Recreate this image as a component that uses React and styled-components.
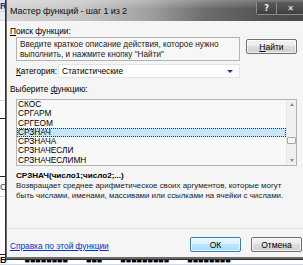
import React from 'react'
import styled, { createGlobalStyle } from 'styled-components'

const GlobalStyle = createGlobalStyle`
  html, body {
    margin: 0;
    padding: 0;
    background: #ffffff;
  }
  body {
    font-family: "Liberation Sans", Arial, sans-serif;
    font-size: 8.3px;
    color: #000;
  }
`

const Desktop = styled.div`
  position: relative;
  width: 303px;
  height: 265px;
  overflow: hidden;
  background: #ffffff;
`

/* excel sheet peeking out behind the dialog */
const Sheet = styled.div`
  display: grid;
  grid-template-rows: 12px 9px 80px 18px 58px 20px 58px 10px;
  height: 265px;
`

const SheetRow = styled.div`
  background: ${p => p.bg || '#fff'};
  border-bottom: 1px solid ${p => p.line || '#d0d7e5'};
  display: flex;
  align-items: ${p => (p.top ? 'flex-start' : 'center')};
  font-size: 9px;
  font-weight: ${p => (p.bold ? 'bold' : 'normal')};
  color: ${p => p.color || '#000'};
  white-space: nowrap;
  gap: 18px;
  overflow: hidden;
`

const Window = styled.div`
  position: absolute;
  left: 5px;
  top: 0;
  bottom: 5px;
  width: 310px;
  box-sizing: border-box;
  border: 1px solid #2e2e2e;
  border-top: none;
  background: #6b6b6b;
  padding: 0 0 2px 1px;
  display: flex;
  flex-direction: column;
`

const TitleBar = styled.div`
  height: 21px;
  flex: none;
  display: flex;
  align-items: center;
  padding-left: 3px;
  background:
    linear-gradient(to bottom, rgba(255,255,255,0.25), rgba(255,255,255,0) 45%),
    linear-gradient(to right, #d2d2d2 0%, #c4c4c4 25%, #a2a2a2 45%, #6c6c6c 65%, #505050 85%, #464646 100%);
`

const Title = styled.div`
  font-size: 9px;
  color: #111;
  flex: 1;
  letter-spacing: -0.1px;
`

const CaptionButtons = styled.div`
  display: flex;
  align-self: flex-start;
  margin-top: 2px;
  margin-right: 9px;
  border: 1px solid #8c8c8c;
  border-top: none;
  border-radius: 0 0 3px 3px;
`

const CaptionButton = styled.div`
  width: ${p => p.w}px;
  height: 12px;
  display: flex;
  align-items: center;
  justify-content: center;
  background: linear-gradient(to bottom, #5c5c5c, #3f3f3f);
  color: #f4f4f4;
  font-family: "DejaVu Sans", sans-serif;
  font-weight: bold;
  font-size: 8px;
  & + & {
    border-left: 1px solid #8c8c8c;
  }
`

const Client = styled.div`
  flex: 1;
  min-height: 0;
  background: #f5f5f5;
  display: flex;
  flex-direction: column;
  padding: 4px 0 0 3px;
`

const Label = styled.div`
  height: 12px;
  line-height: 12px;
  margin-top: ${p => p.mt || 0}px;
  u { text-decoration: underline; }
`

const SearchRow = styled.div`
  display: flex;
  align-items: flex-start;
  gap: 6px;
  margin-left: 6px;
`

const SearchBox = styled.div`
  width: 224px;
  height: 24px;
  box-sizing: border-box;
  border: 1px solid #b3b3b3;
  background: #f7f7f7;
  padding: 2px 3px;
  font-size: 8.2px;
  line-height: 10px;
  color: #1a1a1a;
`

const Button = styled.div`
  width: ${p => p.w || 51}px;
  height: 15px;
  box-sizing: border-box;
  margin-top: ${p => p.mt || 0}px;
  border: 1px solid ${p => (p.primary ? '#3c7fb1' : '#707070')};
  border-radius: 2px;
  display: flex;
  align-items: center;
  justify-content: center;
  font-size: 8.5px;
  background: ${p =>
    p.primary
      ? 'linear-gradient(to bottom, #eaf6fd 0%, #d9f0fc 45%, #bee6fd 50%, #a7d9f5 100%)'
      : 'linear-gradient(to bottom, #f2f2f2 0%, #ebebeb 45%, #dddddd 50%, #cfcfcf 100%)'};
  box-shadow: inset 0 0 0 1px rgba(255,255,255,0.7);
  u { text-decoration: underline; }
`

const CategoryRow = styled.div`
  display: flex;
  align-items: center;
  margin: 3px 0 0 6px;
  height: 14px;
`

const CategoryLabel = styled.div`
  width: 42px;
  u { text-decoration: underline; }
`

const Select = styled.div`
  width: 182px;
  height: 14px;
  box-sizing: border-box;
  background: #ffffff;
  border: 1px solid #e3e3e3;
  display: flex;
  align-items: center;
  justify-content: space-between;
  padding: 0 6px 0 3px;
`

const Arrow = styled.span`
  width: 0;
  height: 0;
  border-left: 3px solid transparent;
  border-right: 3px solid transparent;
  border-top: 3px solid #1f3a8a;
`

const ListBox = styled.div`
  margin: 4px 0 0 6px;
  width: 281px;
  height: 67px;
  flex: none;
  box-sizing: border-box;
  border: 1px solid #b3b3b3;
  background: #f8f8f8;
  display: flex;
`

const Items = styled.div`
  flex: 1;
  display: flex;
  flex-direction: column;
`

const Item = styled.div`
  height: 9.3px;
  line-height: 9.3px;
  padding-left: 1px;
  font-size: 8.3px;
  box-sizing: border-box;
  background: ${p => (p.selected ? '#c7e6f7' : 'transparent')};
  outline: ${p => (p.selected ? '1px dotted #333' : 'none')};
  outline-offset: -1px;
`

const ScrollBar = styled.div`
  width: 10px;
  border-left: 1px solid #e6e6e6;
  background: #f0f0f0;
  display: flex;
  flex-direction: column;
  align-items: center;
  justify-content: space-between;
  padding: 3px 0;
  box-sizing: border-box;
  position: relative;
`

const ScrollArrow = styled.span`
  width: 0;
  height: 0;
  border-left: 2.5px solid transparent;
  border-right: 2.5px solid transparent;
  ${p => (p.up ? 'border-bottom: 3px solid #8a8a8a;' : 'border-top: 3px solid #8a8a8a;')}
`

const Thumb = styled.div`
  position: absolute;
  left: 0;
  right: 0;
  top: 37px;
  height: 5px;
  border: 1px solid #a8a8a8;
  border-radius: 1px;
  background: #f4f4f4;
`

const Signature = styled.div`
  margin: 4px 0 0 6px;
  height: 11px;
  line-height: 11px;
  font-size: 8.1px;
  font-weight: bold;
`

const Description = styled.div`
  margin-left: 6px;
  font-size: 7.9px;
  line-height: 10px;
  white-space: nowrap;
  color: #1a1a1a;
`

const Footer = styled.div`
  margin-top: auto;
  margin-left: -3px;
  border-top: 1px solid #e2e2e2;
  height: 27px;
  flex: none;
  display: flex;
  align-items: center;
  gap: 10px;
  padding: 1px 0 0 3px;
`

const HelpLink = styled.a`
  color: #0033cc;
  text-decoration: underline;
  flex: 1;
  margin-top: 4px;
`

const Buttons = styled.div`
  display: flex;
  gap: 10px;
  margin-right: 12px;
  margin-top: 2px;
`

const functions = ['СКОС', 'СРГАРМ', 'СРГЕОМ', 'СРЗНАЧ', 'СРЗНАЧА', 'СРЗНАЧЕСЛИ', 'СРЗНАЧЕСЛИМН']

export default function App() {
  return (
    <Desktop>
      <GlobalStyle />
      <Sheet>
        <SheetRow bg="#dbe5f1" color="#1f3a6e" bold>R</SheetRow>
        <SheetRow bg="#e8eef7" />
        <SheetRow />
        <SheetRow line="#222" />
        <SheetRow line="#222" />
        <SheetRow color="#1f3a6e">С</SheetRow>
        <SheetRow line="#222" />
        <SheetRow bold top>
          <span>Б</span><span>■■■■■■■■</span><span>■■■</span><span>■■■■■■■■■</span><span>■■■■■■■■</span>
        </SheetRow>
      </Sheet>

      <Window>
        <TitleBar>
          <Title>Мастер функций - шаг 1 из 2</Title>
          <CaptionButtons>
            <CaptionButton w={19}>?</CaptionButton>
            <CaptionButton w={27}>✕</CaptionButton>
          </CaptionButtons>
        </TitleBar>

        <Client>
          <Label><u>П</u>оиск функции:</Label>
          <SearchRow>
            <SearchBox>
              Введите краткое описание действия, которое нужно<br />
              выполнить, и нажмите кнопку "Найти"
            </SearchBox>
            <Button mt={2}><u>Н</u>айти</Button>
          </SearchRow>

          <CategoryRow>
            <CategoryLabel><u>К</u>атегория:</CategoryLabel>
            <Select>
              <span>Статистические</span>
              <Arrow />
            </Select>
          </CategoryRow>

          <Label mt={5}>Выберите <u>ф</u>ункцию:</Label>
          <ListBox>
            <Items>
              {functions.map(f => (
                <Item key={f} selected={f === 'СРЗНАЧ'}>{f}</Item>
              ))}
            </Items>
            <ScrollBar>
              <ScrollArrow up />
              <Thumb />
              <ScrollArrow />
            </ScrollBar>
          </ListBox>

          <Signature>СРЗНАЧ(число1;число2;...)</Signature>
          <Description>
            Возвращает среднее арифметическое своих аргументов, которые могут<br />
            быть числами, именами, массивами или ссылками на ячейки с числами.
          </Description>

          <Footer>
            <HelpLink href="#">Справка по этой функции</HelpLink>
            <Buttons>
              <Button primary>ОК</Button>
              <Button>Отмена</Button>
            </Buttons>
          </Footer>
        </Client>
      </Window>
    </Desktop>
  )
}
